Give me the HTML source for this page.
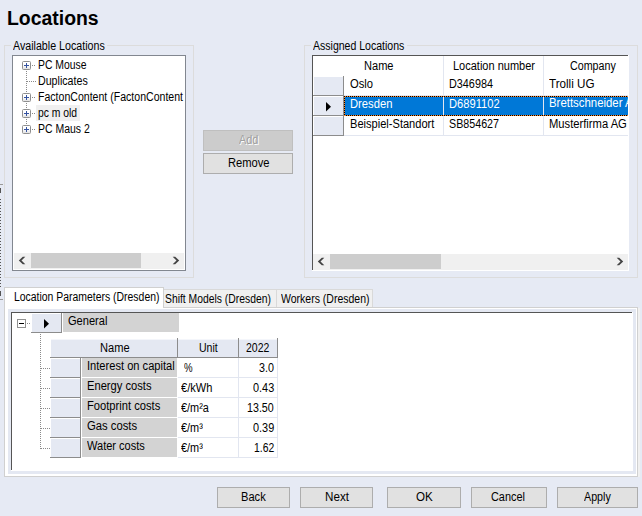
<!DOCTYPE html>
<html>
<head>
<meta charset="utf-8">
<title>Locations</title>
<style>
*{box-sizing:border-box;margin:0;padding:0}
html,body{width:642px;height:516px;overflow:hidden}
body{background:#e6eaf4;font-family:"Liberation Sans",sans-serif;font-size:12.5px;color:#000;position:relative}
div{position:absolute;white-space:nowrap}
svg{position:absolute;overflow:visible}
.title{left:6.9px;top:6px;font-size:19.5px;font-weight:bold;line-height:24px;transform:scaleX(0.995);transform-origin:0 0}
.t{font-size:12.5px;line-height:15px;height:15px;transform-origin:0 0}
.w{color:#fff}
.dis{color:#a0a0a0;text-shadow:1px 1px 0 #fff}
.gb{border:1px solid #dcdcdc}
.gbl{background:#e6eaf4;height:13px}
.btn{border:1px solid #adadad;background:#e1e1e1}
.btnd{border:1px solid #bfbfbf;background:#cccccc}
.sb{background:#f0f0f0;height:17px}
.thumb{background:#cdcdcd;height:17px}
.pm{width:9px;height:9px;border:1px solid #8f8f8f;border-radius:1.5px;background:linear-gradient(#fff 45%,#e2e2e2)}
.pm i{position:absolute;left:1px;top:3px;width:5px;height:1px;background:#3553a0}
.pm b{position:absolute;left:3px;top:1px;width:1px;height:5px;background:#3553a0}
.dv{width:1px;background-image:linear-gradient(#8a8a8a 50%,transparent 50%);background-size:1px 2px}
.dh{height:1px;background-image:linear-gradient(90deg,#8a8a8a 50%,transparent 50%);background-size:2px 1px}
.rh{background:#e5e9f3;border-right:1px solid #8c8c8c;border-bottom:1px solid #8c8c8c;box-shadow:inset 1px 1px 0 #fff}
.gc{background:#d3d3d3}
.hc{background:#e4e8f2;border-right:1px solid #8c8c8c;border-bottom:1px solid #8c8c8c;box-shadow:inset 0 1px 0 #f4f6fb}
.vl{width:1px;background:#e2e6f0}
.hl{height:1px;background:#e2e6f0}
</style>
</head>
<body>
<!-- left edge artefact -->
<div style="left:0;top:184px;width:3px;height:1px;background:#9a9a9a"></div>
<div style="left:0;top:188px;width:1px;height:5px;background:#555"></div>
<div style="left:0;top:199px;width:1px;height:88px;background:repeating-linear-gradient(#555 0,#555 1px,transparent 1px,transparent 3px)"></div>
<div style="left:0;top:291px;width:1px;height:5px;background:#555"></div>
<div style="left:0;top:299px;width:3px;height:1px;background:#9a9a9a"></div>

<div class="title">Locations</div>

<!-- Available Locations group -->
<div class="gb" style="left:4px;top:45px;width:190px;height:233px"></div>
<div class="gbl" style="left:11px;top:39px;width:96px"></div>
<div style="left:12px;top:55px;width:174px;height:216px;background:#fff;border:1px solid #828790"></div>
<div class="dv" style="left:26px;top:71px;height:54px"></div>
<div class="dh" style="left:32px;top:65px;width:4px"></div>
<div class="dh" style="left:27px;top:81px;width:9px"></div>
<div class="dh" style="left:32px;top:97px;width:4px"></div>
<div class="dh" style="left:32px;top:113px;width:4px"></div>
<div class="dh" style="left:32px;top:129px;width:4px"></div>
<div class="pm" style="left:22px;top:61px"><i></i><b></b></div>
<div class="pm" style="left:22px;top:93px"><i></i><b></b></div>
<div class="pm" style="left:22px;top:109px"><i></i><b></b></div>
<div class="pm" style="left:22px;top:125px"><i></i><b></b></div>
<div style="left:36px;top:105px;width:44px;height:16px;background:#f0f0f0"></div>
<div style="left:13px;top:56px;width:172px;height:214px;border:1px solid #fff"></div>
<div class="sb" style="left:14px;top:253px;width:170px;height:16px"></div>
<div class="thumb" style="left:31px;top:253px;width:110px;height:15px"></div>
<svg style="left:0;top:0" width="200" height="280"><path d="M18.8 260.5 L22.8 256.8 L25.3 256.8 L21.5 260.5 L25.3 264.2 L22.8 264.2 Z M179.2 260.5 L175.2 256.8 L172.7 256.8 L176.5 260.5 L172.7 264.2 L175.2 264.2 Z" fill="#444"/></svg>

<!-- Add / Remove -->
<div class="btnd" style="left:203px;top:130px;width:90px;height:21px"></div>
<div class="btn" style="left:203px;top:153px;width:90px;height:21px"></div>

<!-- Assigned Locations group -->
<div class="gb" style="left:304px;top:45px;width:334px;height:233px"></div>
<div class="gbl" style="left:311px;top:39px;width:96px"></div>
<div style="left:312px;top:55px;width:317px;height:216px;background:#fff;border-left:1px solid #555;border-top:1px solid #555"></div>
<div style="left:628px;top:55px;width:1px;height:1px;background:#fff"></div>
<div style="left:312px;top:270px;width:1px;height:1px;background:#fff"></div>
<div class="vl" style="left:443px;top:56px;height:80px"></div>
<div class="vl" style="left:543px;top:56px;height:80px"></div>
<div class="hl" style="left:344px;top:95px;width:284px"></div>
<div class="hl" style="left:344px;top:135px;width:284px"></div>
<div class="rh" style="left:313px;top:76px;width:31px;height:20px"></div>
<div class="rh" style="left:313px;top:96px;width:31px;height:20px"></div>
<div class="rh" style="left:313px;top:116px;width:31px;height:20px"></div>
<svg style="left:326px;top:102px" width="6" height="10"><path d="M0 0 L5 4.75 L0 9.5 Z" fill="#000"/></svg>
<div style="left:344px;top:96px;width:284px;height:20px;background:#0078d7"></div>
<div style="left:443px;top:97px;width:1px;height:18px;background:#e2e6f0"></div>
<div style="left:543px;top:97px;width:1px;height:18px;background:#e2e6f0"></div>
<div style="left:344px;top:96px;width:284px;height:1px;background-image:linear-gradient(90deg,#000 50%,#ff8a2a 50%);background-size:2px 1px"></div>
<div style="left:344px;top:115px;width:284px;height:1px;background-image:linear-gradient(90deg,#000 50%,#ff8a2a 50%);background-size:2px 1px"></div>
<div style="left:344px;top:96px;width:1px;height:20px;background-image:linear-gradient(#000 50%,#ff8a2a 50%);background-size:1px 2px"></div>
<div class="sb" style="left:313px;top:254px;width:315px;height:16px"></div>
<div class="thumb" style="left:330px;top:254px;width:111px;height:15px"></div>
<svg style="left:0;top:0" width="642" height="280"><path d="M317.8 261.5 L321.8 257.8 L324.3 257.8 L320.5 261.5 L324.3 265.2 L321.8 265.2 Z M623.2 261.5 L619.2 257.8 L616.7 257.8 L620.5 261.5 L616.7 265.2 L619.2 265.2 Z" fill="#444"/></svg>

<!-- Tabs -->
<div style="left:4px;top:307px;width:634px;height:170px;background:#fff;border:1px solid #d0d0d0"></div>
<div style="left:638px;top:308px;width:2px;height:169px;background:#f0f0f0"></div>
<div style="left:163px;top:289px;width:114px;height:18px;background:#f0f0f0;border:1px solid #d9d9d9;border-bottom:none"></div>
<div style="left:276px;top:289px;width:97px;height:18px;background:#f0f0f0;border:1px solid #d9d9d9;border-bottom:none"></div>
<div style="left:4px;top:287px;width:160px;height:21px;background:#fff;border:1px solid #d0d0d0;border-bottom:none"></div>

<!-- inner panel -->
<div style="left:8px;top:309px;width:628px;height:165px;background:#e4e8f2"></div>
<div style="left:11px;top:312px;width:622px;height:159px;background:#fff;border-left:1px solid #555;border-top:1px solid #555"></div>
<div style="left:632px;top:312px;width:1px;height:1px;background:#fff"></div>
<div style="left:11px;top:470px;width:1px;height:1px;background:#fff"></div>
<div class="pm" style="left:17px;top:319px;border-radius:0;background:#fff;border-color:#919191"><i style="background:#000"></i></div>
<div class="dh" style="left:27px;top:323px;width:4px"></div>
<div class="dv" style="left:40px;top:334px;height:115px"></div>
<div class="dh" style="left:41px;top:368px;width:9px"></div>
<div class="dh" style="left:41px;top:388px;width:9px"></div>
<div class="dh" style="left:41px;top:408px;width:9px"></div>
<div class="dh" style="left:41px;top:428px;width:9px"></div>
<div class="dh" style="left:41px;top:448px;width:9px"></div>
<div style="left:32px;top:314px;width:29px;height:18px;background:#e4e8f2"></div>
<div style="left:61px;top:313px;width:1px;height:20px;background:#8c8c8c"></div>
<div style="left:31px;top:332px;width:31px;height:1px;background:#8c8c8c"></div>
<svg style="left:44px;top:319px" width="6" height="10"><path d="M0 0 L5 4.75 L0 9.5 Z" fill="#000"/></svg>
<div class="gc" style="left:63px;top:313px;width:116px;height:19px"></div>
<div class="hc" style="left:51px;top:339px;width:127px;height:19px"></div>
<div style="left:50px;top:357px;width:1px;height:1px;background:#8c8c8c"></div>
<div class="hc" style="left:178px;top:339px;width:61px;height:19px"></div>
<div class="hc" style="left:239px;top:339px;width:39px;height:19px"></div>
<div style="left:177px;top:338px;width:1px;height:1px;background:#8c8c8c"></div>
<div style="left:238px;top:338px;width:1px;height:1px;background:#8c8c8c"></div>
<div style="left:277px;top:338px;width:1px;height:1px;background:#8c8c8c"></div>
<div class="rh" style="left:50px;top:358px;width:31px;height:20px"></div>
<div class="rh" style="left:50px;top:378px;width:31px;height:20px"></div>
<div class="rh" style="left:50px;top:398px;width:31px;height:20px"></div>
<div class="rh" style="left:50px;top:418px;width:31px;height:20px"></div>
<div class="rh" style="left:50px;top:438px;width:31px;height:20px"></div>
<div class="gc" style="left:82px;top:358px;width:95px;height:19px"></div>
<div class="gc" style="left:82px;top:378px;width:95px;height:19px"></div>
<div class="gc" style="left:82px;top:398px;width:95px;height:19px"></div>
<div class="gc" style="left:82px;top:418px;width:95px;height:19px"></div>
<div class="gc" style="left:82px;top:438px;width:95px;height:19px"></div>
<div class="vl" style="left:238px;top:358px;height:100px"></div>
<div class="vl" style="left:277px;top:358px;height:100px"></div>
<div class="hl" style="left:178px;top:377px;width:100px"></div>
<div class="hl" style="left:178px;top:397px;width:100px"></div>
<div class="hl" style="left:178px;top:417px;width:100px"></div>
<div class="hl" style="left:178px;top:437px;width:100px"></div>
<div class="hl" style="left:178px;top:457px;width:100px"></div>

<!-- bottom buttons -->
<div class="btn" style="left:217px;top:487px;width:73px;height:21px"></div>
<div class="btn" style="left:300px;top:487px;width:73px;height:21px"></div>
<div class="btn" style="left:387px;top:487px;width:74px;height:21px"></div>
<div class="btn" style="left:471px;top:487px;width:76px;height:21px"></div>
<div class="btn" style="left:557px;top:487px;width:81px;height:21px"></div>

<div class="t" style="left:13.20px;top:39px;transform:scaleX(0.8533)">Available Locations</div>
<div class="t" style="left:313.40px;top:39px;transform:scaleX(0.8426)">Assigned Locations</div>
<div class="t" style="left:37.87px;top:58px;transform:scaleX(0.8316)">PC Mouse</div>
<div class="t" style="left:37.85px;top:74px;transform:scaleX(0.8526)">Duplicates</div>
<div class="t" style="left:37.85px;top:90px;transform:scaleX(0.8450)">FactonContent (FactonContent</div>
<div class="t" style="left:38.00px;top:106px;transform:scaleX(0.8277)">pc m old</div>
<div class="t" style="left:37.86px;top:122px;transform:scaleX(0.8377)">PC Maus 2</div>
<div class="t dis" style="left:238.60px;top:133px;transform:scaleX(0.8727)">Add</div>
<div class="t" style="left:227.71px;top:156px;transform:scaleX(0.8933)">Remove</div>
<div class="t" style="left:363.82px;top:59px;transform:scaleX(0.8844)">Name</div>
<div class="t" style="left:453.32px;top:59px;transform:scaleX(0.8804)">Location number</div>
<div class="t" style="left:570.00px;top:59px;transform:scaleX(0.8556)">Company</div>
<div class="t" style="left:350.20px;top:77px;transform:scaleX(0.8962)">Oslo</div>
<div class="t" style="left:448.83px;top:77px;transform:scaleX(0.8660)">D346984</div>
<div class="t" style="left:549.40px;top:77px;transform:scaleX(0.9313)">Trolli UG</div>
<div class="t w" style="left:349.60px;top:97px;transform:scaleX(0.8978)">Dresden</div>
<div class="t w" style="left:448.81px;top:97px;transform:scaleX(0.8911)">D6891102</div>
<div style="left:547.80px;top:96px;width:80.20px;height:15px;overflow:hidden"><div class="t w" style="left:1.09px;top:0;transform:scaleX(0.9120)">Brettschneider AG</div></div>
<div class="t" style="left:349.61px;top:117px;transform:scaleX(0.8863)">Beispiel-Standort</div>
<div class="t" style="left:449.30px;top:117px;transform:scaleX(0.8569)">SB854627</div>
<div class="t" style="left:548.90px;top:117px;transform:scaleX(0.8965)">Musterfirma AG</div>
<div class="t" style="left:13.77px;top:290px;transform:scaleX(0.8341)">Location Parameters (Dresden)</div>
<div class="t" style="left:165.00px;top:292px;transform:scaleX(0.8281)">Shift Models (Dresden)</div>
<div class="t" style="left:281.20px;top:292px;transform:scaleX(0.8400)">Workers (Dresden)</div>
<div class="t" style="left:68.40px;top:314px;transform:scaleX(0.8864)">General</div>
<div class="t" style="left:99.71px;top:341px;transform:scaleX(0.8875)">Name</div>
<div class="t" style="left:198.60px;top:341px;transform:scaleX(0.8435)">Unit</div>
<div class="t" style="left:246.30px;top:341px;transform:scaleX(0.8393)">2022</div>
<div class="t" style="left:87.11px;top:359px;transform:scaleX(0.8887)">Interest on capital</div>
<div class="t" style="left:86.51px;top:379px;transform:scaleX(0.8930)">Energy costs</div>
<div class="t" style="left:86.51px;top:399px;transform:scaleX(0.8938)">Footprint costs</div>
<div class="t" style="left:87.40px;top:419px;transform:scaleX(0.9018)">Gas costs</div>
<div class="t" style="left:87.40px;top:439px;transform:scaleX(0.8831)">Water costs</div>
<div class="t" style="left:183.80px;top:361px;transform:scaleX(0.7727)">%</div>
<div class="t" style="left:180.90px;top:381px;transform:scaleX(0.8857)">€/kWh</div>
<div class="t" style="left:180.90px;top:401px;transform:scaleX(0.8719)">€/m²a</div>
<div class="t" style="left:180.90px;top:421px;transform:scaleX(0.8720)">€/m³</div>
<div class="t" style="left:180.90px;top:441px;transform:scaleX(0.8720)">€/m³</div>
<div class="t" style="left:259.10px;top:361px;transform:scaleX(0.8588)">3.0</div>
<div class="t" style="left:252.80px;top:381px;transform:scaleX(0.8708)">0.43</div>
<div class="t" style="left:247.20px;top:401px;transform:scaleX(0.8548)">13.50</div>
<div class="t" style="left:252.80px;top:421px;transform:scaleX(0.8708)">0.39</div>
<div class="t" style="left:253.80px;top:441px;transform:scaleX(0.8292)">1.62</div>
<div class="t" style="left:240.61px;top:490px;transform:scaleX(0.8889)">Back</div>
<div class="t" style="left:324.57px;top:490px;transform:scaleX(0.9320)">Next</div>
<div class="t" style="left:415.60px;top:490px;transform:scaleX(0.9278)">OK</div>
<div class="t" style="left:490.80px;top:490px;transform:scaleX(0.8718)">Cancel</div>
<div class="t" style="left:584.10px;top:490px;transform:scaleX(0.8562)">Apply</div>
</body>
</html>
